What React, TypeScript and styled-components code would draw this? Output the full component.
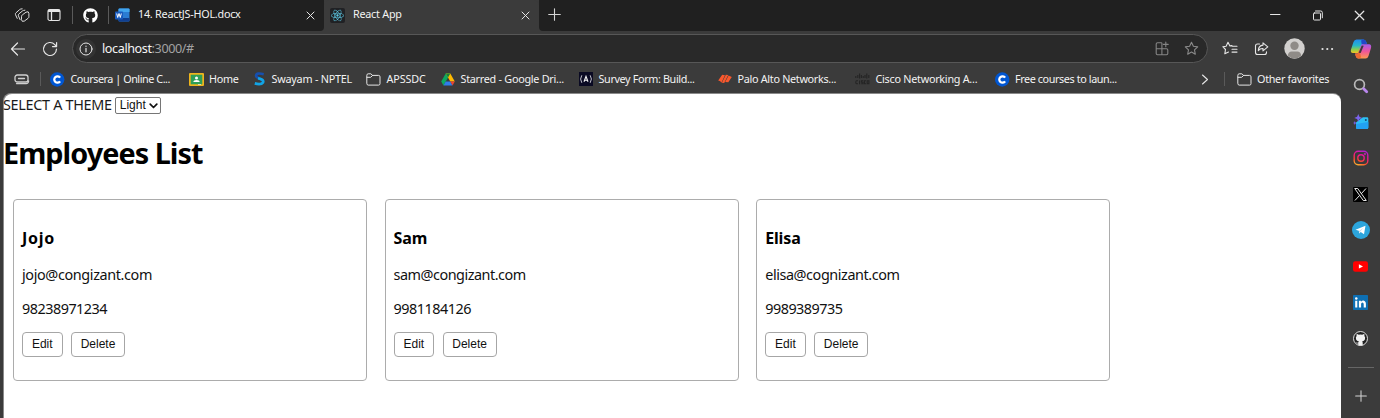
import React from "react";
import styled, { createGlobalStyle } from "styled-components";
import { FaGithub, FaReact } from "react-icons/fa";

const UI = `"Noto Sans", "Open Sans", sans-serif`;

const GlobalStyle = createGlobalStyle`
  * { box-sizing: border-box; }
  body { margin: 0; background: #3b3b3b; overflow: hidden; font-family: ${UI}; }
  button, select { font-family: "Liberation Sans", Arial, sans-serif; }
`;

const Window = styled.div`
  display: flex;
  flex-direction: column;
  width: 1380px;
  height: 418px;
  background: #3b3b3b;
  color: #f3f3f3;
`;

const Track = styled.span<{ $ls?: number }>`
  letter-spacing: ${(p) => p.$ls ?? 0}px;
  white-space: nowrap;
`;

const TabBar = styled.header`
  display: flex;
  flex: none;
  height: 31px;
  background: #3b3b3b;
`;

const TabStrip = styled.div<{ $left?: boolean }>`
  display: flex;
  align-items: center;
  height: 30.5px;
  background: #202020;
  border-radius: ${(p) => (p.$left ? "0 0 4px 0" : "0 0 0 4px")};
  width: ${(p) => (p.$left ? "324px" : "auto")};
  flex: ${(p) => (p.$left ? "none" : "1")};
  svg { display: block; flex: none; }
`;

const StripButtons = styled.div`
  display: flex;
  align-items: center;
  padding-left: 14px;
  gap: 17px;
`;

const Rule = styled.i<{ $ml?: number; $mr?: number; $h?: number }>`
  width: 1px;
  flex: none;
  height: ${(p) => p.$h ?? 18}px;
  margin: 0 ${(p) => p.$mr ?? 0}px 0 ${(p) => p.$ml ?? 0}px;
  background: #5a5a5a;
`;

const TabTitle = styled.div`
  flex: 1;
  font-size: 10.8px;
  line-height: 16px;
  padding-left: 8px;
  padding-bottom: 2px;
`;

const InactiveTab = styled.div`
  display: flex;
  align-items: center;
  width: 215px;
  padding: 0 9px 0 6px;
`;

const ActiveTab = styled.div`
  display: flex;
  align-items: center;
  width: 215px;
  height: 31px;
  padding: 0 9px 1px 6px;
  background: #3b3b3b;
  border-radius: 5px 5px 0 0;
  svg { display: block; flex: none; }
`;

const ReactBadge = styled.div`
  display: grid;
  place-items: center;
  width: 15px;
  height: 15px;
  border-radius: 2px;
  background: #202124;
  color: #5cc8e4;
`;

const NewTab = styled.div`
  padding-left: 9px;
  padding-bottom: 2px;
`;

const WindowControls = styled.div`
  display: flex;
  align-items: center;
  gap: 31px;
  margin-left: auto;
  padding-right: 15px;
`;

const Below = styled.div`
  display: flex;
  flex: 1;
  min-height: 0;
`;

const Main = styled.div`
  display: flex;
  flex-direction: column;
  width: 1341px;
`;

const Toolbar = styled.div`
  display: flex;
  align-items: center;
  flex: none;
  height: 35px;
  padding-left: 10px;
  svg { display: block; flex: none; }
`;

const NavButtons = styled.div`
  display: flex;
  align-items: center;
  gap: 16px;
  width: 62px;
`;

const AddressBar = styled.div`
  display: flex;
  align-items: center;
  width: 1136px;
  height: 29px;
  padding: 0 8px 0 3px;
  border: 1px solid #575757;
  border-radius: 15px;
  background: #292929;
`;

const SiteInfo = styled.div`
  display: grid;
  place-items: center;
  width: 20px;
  height: 20px;
  border-radius: 50%;
  background: #333;
`;

const Url = styled.div`
  flex: 1;
  padding: 1px 0 0 6px;
  font-size: 12.6px;
  line-height: 20px;
  color: #f5f5f5;
  em { font-style: normal; color: #a3a3a3; }
`;

const AddressActions = styled.div`
  display: flex;
  gap: 14px;
`;

const ToolbarActions = styled.div`
  display: flex;
  align-items: center;
  padding-left: 14px;
  gap: 15.5px;
`;

const Favorites = styled.nav`
  display: flex;
  align-items: center;
  flex: none;
  height: 27px;
  padding: 0 0 1px 14px;
  font-size: 10.8px;
  line-height: 16px;
  svg { display: block; flex: none; }
`;

const Favorite = styled.div<{ $w: number }>`
  display: flex;
  align-items: center;
  gap: 5.5px;
  width: ${(p) => p.$w}px;
  flex: none;
`;

const Overflow = styled.div`
  display: flex;
  align-items: center;
  margin-left: 83px;
`;

const Page = styled.main`
  display: flex;
  flex: 1;
  margin-left: 3px;
  padding: 1px 0 0 1px;
  background: #8a8a8a;
  border-radius: 8px 8px 0 0;
  color: #111;
  font-size: 14.4px;
  line-height: 19px;
`;

const PageSurface = styled.div`
  flex: 1;
  background: #fff;
  border-radius: 8px 8px 0 0;
`;

const ThemeRow = styled.div`
  display: flex;
  align-items: center;
  height: 20px;
  gap: 3px;
  margin-left: -1px;
  color: #1a1a1a;
`;

const SelectBox = styled.div`
  display: grid;
  align-items: center;
  width: 46px;
  height: 17px;
  margin-top: 3px;
  > * { grid-area: 1 / 1; }
  svg { justify-self: end; margin-right: 3px; pointer-events: none; }
  select {
    appearance: none;
    width: 46px;
    height: 17px;
    padding: 0 0 0 4px;
    border: 1px solid #767676;
    border-radius: 2px;
    background: #fff;
    color: #111;
    font-size: 12px;
    line-height: 15px;
  }
`;

const Heading = styled.h1`
  margin: 19px 0 26px -1px;
  height: 40px;
  font-size: 28.8px;
  line-height: 40px;
  color: #000;
`;

const CardRow = styled.div`
  display: flex;
  gap: 17.6px;
  padding-left: 9px;
`;

const Card = styled.section`
  width: 354px;
  height: 182px;
  padding: 28px 8px 0;
  border: 1px solid #acacac;
  border-radius: 4px;
  h3 { margin: 0 0 17px; height: 20px; font-size: 16px; line-height: 20px; color: #000; }
  p { margin: 0 0 15px; height: 19px; }
`;

const CardButtons = styled.div`
  display: flex;
  gap: 8.5px;
  margin-top: -1px;
`;

const CardButton = styled.button<{ $w: number }>`
  width: ${(p) => p.$w}px;
  height: 25px;
  padding: 0 0 1px;
  border: 1px solid #a6a6a6;
  border-radius: 4px;
  background: #fff;
  color: #111;
  font-size: 12px;
`;

const Sidebar = styled.aside`
  display: flex;
  flex-direction: column;
  align-items: center;
  width: 39px;
  svg { display: block; }
`;

const SideSlot = styled.div<{ $h?: number }>`
  display: grid;
  place-items: center;
  height: ${(p) => p.$h ?? 36}px;
  flex: none;
`;

const SideRule = styled.i`
  flex: none;
  width: 26px;
  height: 1px;
  margin: 12px 0 10px;
  background: #666;
`;

type IconProps = { size?: number; width?: number; color?: string; sw?: number; box?: string; children: React.ReactNode };
const Line = ({ size = 16, width, color = "#e6e6e6", sw = 1.1, box, children }: IconProps) => (
  <svg width={width ?? size} height={size} viewBox={box ?? `0 0 ${width ?? size} ${size}`} fill="none" stroke={color} strokeWidth={sw} strokeLinecap="round" strokeLinejoin="round">
    {children}
  </svg>
);

const Workspaces = () => (
  <Line sw={0.95}>
    <path d="M3.200 11.400 1.500 7.700Q1 6.500 2 5.800L5.500 2.700Q6.500 1.700 8.200 1.800" />
    <path d="M6.100 12.700 4.400 8.800Q4 7.700 4.900 6.900L8.400 4Q9.400 3.200 10.900 3.200" />
    <path d="M7.500 9.400Q7.500 8.500 8.300 7.900L12 5.200Q14.800 3.800 14.900 6.300V9.800Q14.900 10.700 14.100 11.300L10.300 14.100Q7.700 15.300 7.500 12.900Z" />
  </Line>
);
const TabActions = () => (
  <Line size={14}>
    <rect x="1" y="1.5" width="12" height="11" rx="1.8" />
    <path d="M1.500 3.300h11M1.500 2.400h11M4.500 4v8" strokeWidth="1.3" />
  </Line>
);
const WordIcon = () => (
  <svg width="15" height="14" viewBox="0 0 15 14">
    <rect x="3.5" y=".5" width="11" height="13" rx="1" fill="#2b7cd3" />
    <path d="M3.500 1.500a1 1 0 0 1 1-1h9a1 1 0 0 1 1 1v2.600h-11Z" fill="#41a5ee" />
    <path d="M3.500 10h11v2.500a1 1 0 0 1-1 1h-9a1 1 0 0 1-1-1Z" fill="#103f91" />
    <rect x="0" y="3.5" width="8" height="8" rx=".8" fill="#185abd" />
    <path d="m1.700 5.500 1 4 1.300-4 1.300 4 1-4" fill="none" stroke="#fff" strokeWidth="1" />
  </svg>
);
const Cross = ({ size = 9 }: { size?: number }) => (
  <Line size={size} box="0 0 9 9" sw={1}><path d="m1 1 7 7m0-7L1 8" /></Line>
);
const Plus = ({ size = 13 }: { size?: number }) => (
  <Line size={size} box="0 0 13 13" color="#d5d5d5"><path d="M6.500 .7v11.600M.7 6.500h11.600" /></Line>
);
const StarShape = "m7.500 1.300 1.900 4 4.300.6-3.200 3 .8 4.300-3.800-2.100-3.800 2.100.8-4.300-3.200-3 4.300-.6Z";
const Folder = () => (
  <Line size={15} sw={1}>
    <path d="M.8 3.200Q.8 1.800 2.200 1.800h2.600L6.600 3.400h6Q14 3.400 14 4.800v6.800q0 1.500-1.400 1.500H2.200Q.8 13.100.8 11.600ZM1 5.300h3.700l1.900-1.900" />
  </Line>
);
const CourseraIcon = () => (
  <svg width="15" height="15" viewBox="0 0 15 15">
    <circle cx="7.200" cy="7.500" r="7.200" fill="#0056d2" />
    <path d="M10.100 5.700a3.200 3.200 0 1 0 0 3.600" fill="none" stroke="#fff" strokeWidth="2.200" />
  </svg>
);
const ClassroomIcon = () => (
  <svg width="15" height="13" viewBox="0 0 15 13">
    <rect width="15" height="13" rx="1" fill="#f0b51c" />
    <rect x="1.7" y="1.7" width="11.6" height="9.6" fill="#2f9e58" />
    <circle cx="7.5" cy="4.9" r="1.5" fill="#fff" />
    <path d="M4.300 9q.2-2 3.200-2t3.200 2Z" fill="#fff" />
    <path d="M9 11.300h3V12H9Z" fill="#eee" />
  </svg>
);
const SwayamIcon = () => (
  <svg width="13" height="14" viewBox="0 0 13 14" fill="none">
    <path d="M10.700 2.200Q3 .2 3.100 3.900c.1 2.400 7 2.700 7 5.600" stroke="#164fae" strokeWidth="2.700" />
    <path d="M5 6.200q6.200 1.300 5 4.200-1.800 2.700-8.200 1" stroke="#12a4e5" strokeWidth="2.700" />
  </svg>
);
const DriveIcon = () => (
  <svg width="14" height="13" viewBox="0 0 14 13">
    <path d="M4.700.5h4.600L7 4.600 2.500 12.400.2 8.600Z" fill="#0da960" />
    <path d="M4.700.5h4.600l4.500 8H9.300Z" fill="#ffba00" />
    <path d="M4.700.5h4.600L7 4.600Z" fill="#188038" />
    <path d="M4.700 8.500h4.600l2.200 3.900h-9Z" fill="#2f7de9" />
    <path d="M9.300 8.500h4.500l-2.300 3.900Z" fill="#ea4335" />
  </svg>
);
const FreeCodeCampIcon = () => (
  <svg width="14" height="14" viewBox="0 0 14 14">
    <rect width="14" height="14" fill="#0a0a23" />
    <path d="M2.800 3.300Q.4 7 2.800 10.800M11.200 3.300q2.400 3.700 0 7.500" fill="none" stroke="#d5d5dc" strokeWidth=".9" />
    <path d="M5 9.800 7 4.300l2 5.500M5.800 8.300h2.500" fill="none" stroke="#f5f5f5" strokeWidth="1.100" />
  </svg>
);
const PaloAltoIcon = () => (
  <svg width="14" height="10" viewBox="0 0 14 10" fill="#fa582d">
    <path d="M4.200.8 7 1.200 3.400 8.800 2.300 7.200.2 6.400ZM7.800.8l2.400.3L6.200 9 3.900 8.700ZM10.600 1.600l3.200 1.300L10.300 8.300 7.200 8Z" />
  </svg>
);
const CiscoIcon = () => (
  <svg width="15" height="12" viewBox="0 0 15 12" fill="none" stroke="#242424" strokeWidth="1.100">
    <path d="M.8 3v2M2.800 2v3M4.600.5v5M6.400 2v3M8.200 3v2M10 2v3M11.800.5v5M13.800 2v3" />
    <path d="M3 7.800H1.500Q.8 7.800.8 9.300t.7 1.500H3M4.600 7.500v3.700M8.300 7.800H6.500v1.400h1.600v1.600H6.200M11 7.800H9.500v3H11M12.200 7.800h1.700v3h-1.700Z" />
  </svg>
);

const favorites: { icon: React.ReactNode; label: string; w: number; ls: number }[] = [
  { icon: <CourseraIcon />, label: "Coursera | Online C...", w: 138.5, ls: -0.45 },
  { icon: <ClassroomIcon />, label: "Home", w: 64.5, ls: -0.3 },
  { icon: <SwayamIcon />, label: "Swayam - NPTEL", w: 113, ls: -0.22 },
  { icon: <Folder />, label: "APSSDC", w: 75, ls: -0.15 },
  { icon: <DriveIcon />, label: "Starred - Google Dri...", w: 138, ls: -0.26 },
  { icon: <FreeCodeCampIcon />, label: "Survey Form: Build...", w: 139, ls: -0.36 },
  { icon: <PaloAltoIcon />, label: "Palo Alto Networks...", w: 137, ls: -0.3 },
  { icon: <CiscoIcon />, label: "Cisco Networking A...", w: 139.5, ls: -0.26 },
  { icon: <CourseraIcon />, label: "Free courses to laun...", w: 123, ls: -0.4 },
];

const employees = [
  { name: "Jojo", email: "jojo@congizant.com", phone: "98238971234", ls: [0.75, -0.37, -0.5] },
  { name: "Sam", email: "sam@congizant.com", phone: "9981184126", ls: [-0.1, -0.48, -0.5] },
  { name: "Elisa", email: "elisa@cognizant.com", phone: "9989389735", ls: [-0.15, -0.42, -0.5] },
];

const Copilot = () => (
  <svg width="22" height="20" viewBox="0 0 22 20">
    <defs>
      <linearGradient id="cpA" x1="0" y1="0" x2="0" y2="1"><stop offset="0" stopColor="#1f8df0" /><stop offset=".45" stopColor="#27b7c8" /><stop offset=".75" stopColor="#8ccf4d" /><stop offset="1" stopColor="#f6c322" /></linearGradient>
      <linearGradient id="cpB" x1="0" y1="0" x2="0" y2="1"><stop offset="0" stopColor="#a35cf0" /><stop offset=".5" stopColor="#f0559a" /><stop offset="1" stopColor="#ff9a4f" /></linearGradient>
    </defs>
    <path d="M6.500.5h7Q15.500.5 16.300 3L17 5h-3.500L11 14H3Q.2 14 1 10.500L3.500 3Q4.300.5 6.500.5Z" fill="url(#cpA)" />
    <path d="M12 .5h1.700q1.800 0 2.600 2.500L17 5h-3q-1.500 0-2 1.600L11.300 3Q11 .9 12 .5Z" fill="#2247c8" />
    <path d="M15.500 19.500h-7Q6.500 19.500 5.700 17L5.200 14.500H8L11 6q.3-.8 1.500-.8H19q2.800.3 2 3.800L18.500 17q-.8 2.500-3 2.500Z" fill="url(#cpB)" />
    <path d="M5.200 14.500H8l1.300-3.700L11 18q-.5 1.500-2.500 1.500Q6.500 19.500 5.700 17Z" fill="#ee6a30" />
    <path d="m11.700 6.500 2 .2-3 7.300-2-.2Z" fill="#3b3b3b" />
  </svg>
);
const SearchIcon = () => (
  <svg width="16" height="16" viewBox="0 0 16 16" fill="none">
    <circle cx="6.500" cy="6.500" r="4.900" stroke="#b9b9b9" strokeWidth="1.700" />
    <path d="m10.700 10.700 3 3" stroke="#b987ee" strokeWidth="2.800" strokeLinecap="round" />
  </svg>
);
const ShoppingIcon = () => (
  <svg width="16" height="16" viewBox="0 0 16 16">
    <path d="m3 8.600 6-4.800Q9.500 3.200 10.200 3.200H14q1.300 0 1.300 1.300v9q0 1.500-1.500 1.500H4.500Q3 15 3 13.500Z" fill="#2cc0f5" />
    <path d="m3 10 12.300-2v5.500q0 1.500-1.500 1.500H4.500Q3 15 3 13.500Z" fill="#22a2f2" />
    <circle cx="12.800" cy="6" r="1" fill="#134a78" />
    <path d="m5.300 0 1.100 2.800L9.200 4 6.400 5.100 5.300 8 4.100 5.100 1.300 4l2.800-1.200ZM1.800 7l.6 1.500 1.400.5-1.400.6-.6 1.400L1.200 9.600 0 9l1.200-.5Z" fill="#7b63ee" />
  </svg>
);
const InstagramIcon = () => (
  <svg width="16" height="16" viewBox="0 0 16 16" fill="none" stroke="url(#ig)" strokeWidth="1.400">
    <defs><linearGradient id="ig" gradientUnits="userSpaceOnUse" x1="4" y1="16" x2="11" y2="0"><stop offset="0" stopColor="#ffc62e" /><stop offset=".3" stopColor="#fb4a2c" /><stop offset=".6" stopColor="#f0148c" /><stop offset="1" stopColor="#a81fd6" /></linearGradient></defs>
    <rect x="1.200" y="1.200" width="13.600" height="13.600" rx="4" />
    <circle cx="8" cy="8" r="3.200" />
    <circle cx="11.900" cy="4.100" r=".4" />
  </svg>
);
const XIcon = () => (
  <svg width="15" height="15" viewBox="0 0 15 15">
    <rect width="15" height="15" rx="1" fill="#000" />
    <path d="M1.700 1.500h3l8.600 12h-3ZM13 1.500 8.300 6.700M6.500 8.500 1.900 13.500" fill="none" stroke="#fff" strokeWidth=".9" />
  </svg>
);
const TelegramIcon = () => (
  <svg width="18" height="18" viewBox="0 0 18 18">
    <circle cx="9" cy="9" r="9" fill="#2ca5dc" />
    <path d="M3.500 8.700 13.500 4.800 12 13.200 8.700 11 7.200 12.500 6.800 9.800Z" fill="#fff" />
    <path d="m7 10 4.500-3.300-3.700 4.200L7.200 12.500Z" fill="#c3dcea" />
  </svg>
);
const YouTubeIcon = () => (
  <svg width="15" height="11" viewBox="0 0 15 11">
    <rect width="15" height="10.500" y=".2" rx="2.300" fill="#f00" />
    <path d="m5.900 3.200 4.100 2.200-4.100 2.200Z" fill="#fff" />
  </svg>
);
const LinkedInIcon = () => (
  <svg width="15" height="15" viewBox="0 0 15 15">
    <rect width="15" height="15" rx=".8" fill="#0d6fb3" />
    <path d="M2.200 5.800h2.100v6.800H2.200ZM5.900 5.800h2v1q2-2.200 4.200-.4.800.8.800 2.400v3.800h-2.200V9.200q0-1.700-1.300-1.700T8.100 9.200v3.400H5.900Z" fill="#fff" />
    <circle cx="3.250" cy="3.500" r="1.250" fill="#fff" />
  </svg>
);
const GitHubSide = () => (
  <svg width="15" height="15" viewBox="0 0 15 15">
    <circle cx="7.500" cy="7.500" r="7" fill="#222" stroke="#f0f0f0" strokeWidth=".9" />
    <path d="M3.700 3Q5 3 5.700 3.700q1.800-.5 3.600 0Q10 3 11.300 3q.3 1 .1 1.900 1.200 1.400.5 3.500-.6 1.700-2.700 1.900.5.600.5 1.700v2.200q-2.200.8-4.400 0v-1.700Q3.700 12.800 3 11.300q1.500.9 2.300.1l.5-1.100Q3.700 10.100 3.100 8.400q-.7-2.100.5-3.500Q3.400 4 3.700 3Z" fill="#f2f2f2" />
  </svg>
);

export default function App() {
  return (
    <Window>
      <GlobalStyle />
      <TabBar>
        <TabStrip $left>
          <StripButtons>
            <Workspaces />
            <TabActions />
          </StripButtons>
          <Rule $ml={11} $mr={10} />
          <FaGithub size={15} color="#fff" />
          <Rule $ml={10} $mr={0} />
          <InactiveTab>
            <WordIcon />
            <TabTitle><Track $ls={-0.24}>14. ReactJS-HOL.docx</Track></TabTitle>
            <Cross />
          </InactiveTab>
        </TabStrip>
        <ActiveTab>
          <ReactBadge><FaReact size={13} /></ReactBadge>
          <TabTitle><Track $ls={-0.25}>React App</Track></TabTitle>
          <Cross />
        </ActiveTab>
        <TabStrip>
          <NewTab><Plus /></NewTab>
          <WindowControls>
            <Line size={11} sw={1}><path d="M.5 4.500h9.500" /></Line>
            <Line size={11} sw={1}><rect x="1.500" y="3" width="7" height="7" rx=".8" /><path d="M3.500 1h5.300Q10.300 1 10.300 2.500v5.300" /></Line>
            <Cross size={11} />
          </WindowControls>
        </TabStrip>
      </TabBar>
      <Below>
        <Main>
          <Toolbar>
            <NavButtons>
              <Line sw={1.200}><path d="M1.500 8h13M7.500 2 1.500 8l6 6" /></Line>
              <Line sw={1.200}><path d="M14.500 8A6.500 6.500 0 1 1 12.800 3.600L14.500 5.500M14.600 1.500v4.100h-4.100" /></Line>
            </NavButtons>
            <AddressBar>
              <SiteInfo>
                <Line size={14} sw={1}><circle cx="7" cy="7" r="6" /><path d="M7 6.300v3.500M7 4.100v.2" strokeWidth="1.200" /></Line>
              </SiteInfo>
              <Url><Track $ls={-0.4}>localhost<em>:3000/#</em></Track></Url>
              <AddressActions>
                <Line size={15} color="#858585"><path d="M6.500 1.800H2.500Q1.200 1.800 1.200 3v9.500q0 1.200 1.300 1.200h9q1.300 0 1.300-1.200V9q0-1.200-1.300-1.200H1.200M6.900 2v11.500M10.800 1v4.800M8.400 3.400h4.800" /></Line>
                <Line size={15} color="#8a8a8a"><path d={StarShape} /></Line>
              </AddressActions>
            </AddressBar>
            <ToolbarActions>
              <Line size={15} width={16}><path d="M10 4.600 7.900 4.900 6 1.300 4.100 5.200.8 5.700l2.700 2.800-.7 4.300L6.500 11M10.300 5.300h4.700M10 8.200h5M10 11.100h5" /></Line>
              <Line size={15}><path d="M5.500 3H3.500Q1.500 3 1.500 5v6.500q0 2 2 2h7q2 0 2-2V10.800M9 1.800l4.800 4L9 9.800V7.500Q6 7.300 4.300 9.600 4.500 4.500 9 4.100Z" /></Line>
              <svg width="21" height="21" viewBox="0 0 21 21">
                <circle cx="10.500" cy="10.500" r="10.200" fill="#d2d0ce" />
                <circle cx="10.500" cy="7.800" r="4.200" fill="#8f8b87" />
                <path d="M3.700 17.500q.8-4 4-4h5.600q3.200 0 4 4-2.800 3-6.800 3t-6.800-3Z" fill="#8f8b87" />
              </svg>
              <svg width="13" height="4" viewBox="0 0 13 4" fill="#e6e6e6"><circle cx="1.500" cy="2" r="1.100" /><circle cx="6.300" cy="2" r="1.100" /><circle cx="11.100" cy="2" r="1.100" /></svg>
            </ToolbarActions>
          </Toolbar>
          <Favorites>
            <Line size={11} width={16} sw={1.300} color="#cfcfcf"><rect x="1" y="1" width="13" height="7" rx="2.300" /><path d="M4.500 4.500h6M2.500 9.600h9.500Q14.500 9.500 14.600 7" /></Line>
            <Rule $ml={10} $mr={9} $h={14} />
            {favorites.map((f) => (
              <Favorite key={f.label} $w={f.w}>{f.icon}<Track $ls={f.ls}>{f.label}</Track></Favorite>
            ))}
            <Overflow>
              <Line size={11} width={8}><path d="m1.500 1 5 4.500-5 4.500" /></Line>
              <Rule $ml={15} $mr={12} $h={14} />
              <Favorite $w={100}><Folder /><Track $ls={-0.3}>Other favorites</Track></Favorite>
            </Overflow>
          </Favorites>
          <Page>
            <PageSurface>
              <ThemeRow>
                <Track $ls={-0.3}>SELECT A THEME</Track>
                <SelectBox>
                  <select defaultValue="Light"><option>Light</option><option>Dark</option></select>
                  <Line size={6} width={9} color="#111" sw={1.700}><path d="m1.200 1.200 3.300 3.300 3.300-3.300" /></Line>
                </SelectBox>
              </ThemeRow>
              <Heading><Track $ls={-0.95}>Employees List</Track></Heading>
              <CardRow>
                {employees.map((e) => (
                  <Card key={e.name}>
                    <h3><Track $ls={e.ls[0]}>{e.name}</Track></h3>
                    <p><Track $ls={e.ls[1]}>{e.email}</Track></p>
                    <p><Track $ls={e.ls[2]}>{e.phone}</Track></p>
                    <CardButtons>
                      <CardButton $w={40.5}>Edit</CardButton>
                      <CardButton $w={54}>Delete</CardButton>
                    </CardButtons>
                  </Card>
                ))}
              </CardRow>
            </PageSurface>
          </Page>
        </Main>
        <Sidebar>
          <SideSlot $h={35}><Copilot /></SideSlot>
          <SideSlot $h={39}><SearchIcon /></SideSlot>
          <SideSlot $h={34}><ShoppingIcon /></SideSlot>
          <SideSlot $h={38}><InstagramIcon /></SideSlot>
          <SideSlot $h={34}><XIcon /></SideSlot>
          <SideSlot $h={38}><TelegramIcon /></SideSlot>
          <SideSlot $h={34}><YouTubeIcon /></SideSlot>
          <SideSlot $h={38}><LinkedInIcon /></SideSlot>
          <SideSlot $h={34}><GitHubSide /></SideSlot>
          <SideRule />
          <SideSlot><Plus size={12} /></SideSlot>
        </Sidebar>
      </Below>
    </Window>
  );
}
